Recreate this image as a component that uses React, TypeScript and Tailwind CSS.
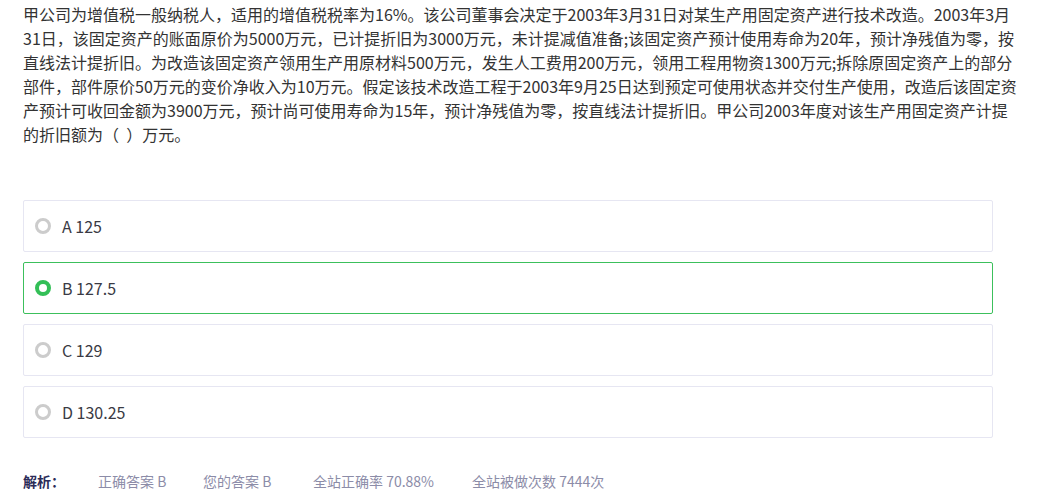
const lines = [
  '甲公司为增值税一般纳税人，适用的增值税税率为16%。该公司董事会决定于2003年3月31日对某生产用固定资产进行技术改造。2003年3月',
  '31日，该固定资产的账面原价为5000万元，已计提折旧为3000万元，未计提减值准备;该固定资产预计使用寿命为20年，预计净残值为零，按',
  '直线法计提折旧。为改造该固定资产领用生产用原材料500万元，发生人工费用200万元，领用工程用物资1300万元;拆除原固定资产上的部分',
  '部件，部件原价50万元的变价净收入为10万元。假定该技术改造工程于2003年9月25日达到预定可使用状态并交付生产使用，改造后该固定资',
  '产预计可收回金额为3900万元，预计尚可使用寿命为15年，预计净残值为零，按直线法计提折旧。甲公司2003年度对该生产用固定资产计提',
  '的折旧额为（\u00a0\u00a0）万元。',
]

const options = [
  { key: 'A', text: '125' },
  { key: 'B', text: '127.5' },
  { key: 'C', text: '129' },
  { key: 'D', text: '130.25' },
]

const font = { fontFamily: '"Microsoft YaHei", "Noto Sans CJK SC", sans-serif' }

export default function App() {
  const selected = 'B'

  return (
    <div className="min-h-[504px] w-[1047px] bg-white text-[#333]" style={font}>
      <div className="pl-[23px] pt-[2px] text-[16px] leading-[24px] text-[#333]">
        {lines.map((l, i) => (
          <div key={i} className="whitespace-nowrap">{l}</div>
        ))}
      </div>

      <div className="mt-[54px] flex w-[970px] flex-col gap-[10px] ml-[23px]">
        {options.map((o) => {
          const on = o.key === selected
          return (
            <div
              key={o.key}
              className={
                on
                  ? 'flex h-[52px] items-center rounded-[2px] border border-[#3cc05c] pl-[11px]'
                  : 'flex h-[52px] items-center rounded-[2px] border border-[#e6e6f2] pl-[11px]'
              }
            >
              <span
                className={
                  on
                    ? 'h-[16px] w-[16px] rounded-full border-[4px] border-[#33bf57]'
                    : 'h-[16px] w-[16px] rounded-full border-[3.5px] border-[#cccccc]'
                }
              />
              <span className="ml-[11px] text-[16px] text-[#3a3a44]">
                {o.key} {o.text}
              </span>
            </div>
          )
        })}
      </div>

      <div className="ml-[23px] mt-[33px] flex items-center text-[14px] text-[#8c8ca8]">
        <span className="w-[75px] font-bold text-[#2c2c58]">解析：</span>
        <span className="w-[105px]">正确答案 B</span>
        <span className="w-[110px]">您的答案 B</span>
        <span className="w-[159px]">全站正确率 70.88%</span>
        <span>全站被做次数 7444次</span>
      </div>
    </div>
  )
}
